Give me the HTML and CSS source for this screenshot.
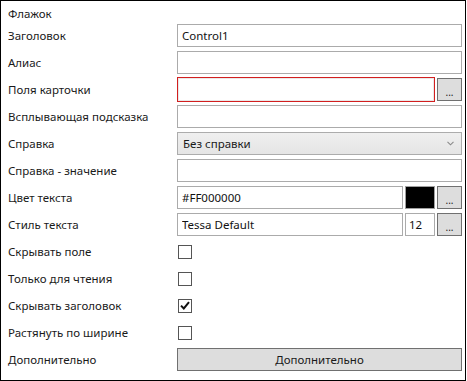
FILE: index.html
```html
<!DOCTYPE html>
<html lang="ru">
<head>
  <meta charset="UTF-8" />
  <title>Флажок</title>
  <link rel="stylesheet" href="styles.css">
</head>
<body>
  <div class="panel">
    <div class="panel-title">Флажок</div>

    <div class="form-grid">
      <label>Заголовок</label>
      <div class="field"><input class="text-box" type="text" value="Control1"></div>

      <label>Алиас</label>
      <div class="field"><input class="text-box" type="text"></div>

      <label>Поля карточки</label>
      <div class="field">
        <div class="text-box invalid"></div>
        <button class="dots-btn">...</button>
      </div>

      <label>Всплывающая подсказка</label>
      <div class="field"><input class="text-box" type="text"></div>

      <label>Справка</label>
      <div class="field">
        <div class="combo">
          <span>Без справки</span>
          <svg class="chevron" width="7" height="5" viewBox="0 0 7 5"><path d="M0.5 0.8 L3.5 3.8 L6.5 0.8" fill="none" stroke="#8a8a8a" stroke-width="1.1"/></svg>
        </div>
      </div>

      <label>Справка - значение</label>
      <div class="field"><input class="text-box" type="text"></div>

      <label>Цвет текста</label>
      <div class="field">
        <input class="text-box" type="text" value="#FF000000">
        <div class="swatch"></div>
        <button class="dots-btn">...</button>
      </div>

      <label>Стиль текста</label>
      <div class="field">
        <input class="text-box" type="text" value="Tessa Default">
        <input class="text-box size-box" type="text" value="12">
        <button class="dots-btn">...</button>
      </div>

      <label>Скрывать поле</label>
      <div class="field"><span class="check"></span></div>

      <label>Только для чтения</label>
      <div class="field"><span class="check"></span></div>

      <label>Скрывать заголовок</label>
      <div class="field">
        <span class="check">
          <svg width="10" height="9" viewBox="0 0 10 9"><path d="M1 4.6 L3.8 7.4 L9 1.2" fill="none" stroke="#111" stroke-width="2"/></svg>
        </span>
      </div>

      <label>Растянуть по ширине</label>
      <div class="field"><span class="check"></span></div>

      <label>Дополнительно</label>
      <div class="field"><button class="wide-btn">Дополнительно</button></div>
    </div>
  </div>
</body>
</html>
```

FILE: styles.css
```css
* {
  box-sizing: border-box;
}

body {
  margin: 0;
  padding: 0;
  font-family: 'Noto Sans', sans-serif;
  font-size: 11.5px;
  color: #1a1a1a;
  background: #fff;
}

.panel {
  width: 466px;
  height: 381px;
  border: 1px solid #000;
  padding: 4px 3px 0 7px;
}

.panel-title {
  height: 17px;
  line-height: 17px;
}

.form-grid {
  display: grid;
  grid-template-columns: 169px 1fr;
  grid-auto-rows: 27px;
  align-items: center;
}

.form-grid label {
  line-height: 16px;
}

.field {
  display: flex;
  align-items: center;
  gap: 2px;
}

.text-box {
  flex: 1;
  min-width: 0;
  height: 23px;
  border: 1px solid #ababab;
  padding: 0 4px;
  font: inherit;
  color: #111;
  background: #fff;
  outline: none;
}

.text-box.invalid {
  height: 25px;
  border: 1px solid #d21f1f;
  box-shadow: inset 0 0 0 1px #e8e8e8;
}

.size-box {
  flex: 0 0 30px;
  padding: 0 3px;
}

.dots-btn {
  flex: 0 0 25px;
  height: 23px;
  border: 1px solid #707070;
  background: #dddddd;
  padding: 5px 0 0;
  font: inherit;
  font-size: 10px;
  line-height: 1;
  color: #222;
}

.swatch {
  flex: 0 0 30px;
  height: 23px;
  background: #000;
  border: 1px solid #a0a0a0;
}

.combo {
  flex: 1;
  height: 23px;
  border: 1px solid #acacac;
  background: linear-gradient(#efefef, #e5e5e5);
  display: flex;
  align-items: center;
  justify-content: space-between;
  padding: 0 7px 0 5px;
}

.check {
  width: 14px;
  height: 14px;
  margin-left: 1px;
  border: 1px solid #555;
  background: #fff;
  display: flex;
  align-items: center;
  justify-content: center;
}

.wide-btn {
  flex: 1;
  height: 23px;
  border: 1px solid #707070;
  background: #dddddd;
  font: inherit;
  color: #1a1a1a;
}
```
